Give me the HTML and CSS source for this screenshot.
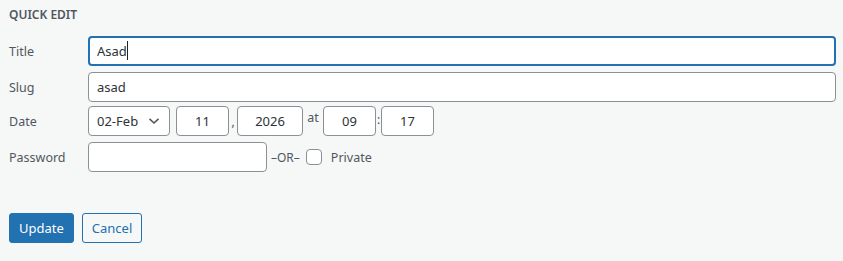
FILE: index.html
```html
<!DOCTYPE html>
<html lang="en">
<head>
    <meta charset="UTF-8">
    <title>Quick Edit</title>
    <link rel="stylesheet" href="styles.css">
</head>
<body>

<div class="quick-edit">
    <h2 class="qe-title">Quick Edit</h2>

    <div class="qe-row qe-row-title">
        <span class="qe-label">Title</span>
        <input class="qe-input qe-focus" type="text" value="Asad">
        <span class="caret"></span>
    </div>

    <div class="qe-row qe-row-slug">
        <span class="qe-label">Slug</span>
        <input class="qe-input" type="text" value="asad">
    </div>

    <div class="qe-row qe-row-date">
        <span class="qe-label">Date</span>
        <div class="qe-select">
            <span>02-Feb</span>
            <svg width="12" height="8" viewBox="0 0 12 8"><path d="M1.5 1.8 L6 6 L10.5 1.8" fill="none" stroke="#50575e" stroke-width="1.6"/></svg>
        </div>
        <input class="qe-input qe-num day" type="text" value="11">
        <span class="sep">,</span>
        <input class="qe-input qe-num year" type="text" value="2026">
        <span class="sep at">at</span>
        <input class="qe-input qe-num hour" type="text" value="09">
        <span class="sep colon">:</span>
        <input class="qe-input qe-num min" type="text" value="17">
    </div>

    <div class="qe-row qe-row-pass">
        <span class="qe-label">Password</span>
        <input class="qe-input pass" type="text" value="">
        <span class="or">&ndash;OR&ndash;</span>
        <span class="checkbox"></span>
        <span class="private">Private</span>
    </div>

    <div class="qe-actions">
        <button class="btn btn-primary">Update</button>
        <button class="btn btn-secondary">Cancel</button>
    </div>
</div>

</body>
</html>
```

FILE: styles.css
```css
body {
    margin: 0;
    background-color: #f6f7f7;
    font-family: "Noto Sans", "Open Sans", sans-serif;
    font-size: 13px;
    color: #3c434a;
}

.quick-edit {
    padding: 6px 7px 0 9px;
}

.qe-title {
    margin: 0 0 12px 0;
    font-size: 12px;
    font-weight: 600;
    text-transform: uppercase;
    color: #50575e;
    line-height: 18px;
}

.qe-row {
    display: flex;
    align-items: center;
    position: relative;
}

.qe-row-title { margin-bottom: 6px; }
.qe-row-slug { margin-bottom: 4px; }
.qe-row-date { margin-bottom: 6px; }

.qe-label {
    width: 79px;
    flex: none;
    color: #50575e;
    font-size: 12.5px;
}

.qe-input {
    box-sizing: border-box;
    height: 30px;
    flex: 1;
    border: 1px solid #8c8f94;
    border-radius: 4px;
    background: #fff;
    padding: 0 8px;
    font-family: inherit;
    font-size: 13px;
    color: #2c3338;
    outline: none;
    min-width: 0;
}

.qe-focus {
    border: 2px solid #2271b1;
    padding-left: 7px;
}

.caret {
    position: absolute;
    left: 118px;
    top: 5px;
    width: 1px;
    height: 19px;
    background: #1d2327;
}

.qe-select {
    box-sizing: border-box;
    width: 82px;
    height: 30px;
    flex: none;
    border: 1px solid #8c8f94;
    border-radius: 4px;
    background: #fff;
    display: flex;
    align-items: center;
    justify-content: space-between;
    padding: 0 9px 0 8px;
    color: #2c3338;
}

.qe-num {
    flex: none;
    text-align: center;
    padding: 0 4px;
}

.day { width: 53px; margin-left: 6px; }
.year { width: 66px; }
.hour { width: 53px; }
.min { width: 53px; }

.sep {
    width: 8px;
    flex: none;
    text-align: center;
    align-self: flex-end;
    padding-bottom: 6px;
    color: #50575e;
    font-size: 12px;
}

.sep.colon {
    width: 5px;
    align-self: flex-start;
    padding: 5px 0 0 0;
}

.sep.at {
    width: 20px;
    align-self: flex-start;
    padding: 3px 0 0 0;
    font-size: 12.5px;
}

.pass {
    flex: none;
    width: 179px;
}

.or {
    margin-left: 4px;
    font-size: 12px;
    color: #50575e;
}

.checkbox {
    box-sizing: border-box;
    width: 16px;
    height: 16px;
    margin-left: 6px;
    border: 1px solid #8c8f94;
    border-radius: 4px;
    background: #fff;
}

.private {
    margin-left: 9px;
    color: #50575e;
    font-size: 12.5px;
}

.qe-actions {
    display: flex;
    gap: 8px;
    margin-top: 41px;
}

.btn {
    box-sizing: border-box;
    height: 30px;
    padding: 0 9px;
    border-radius: 3px;
    font-family: inherit;
    font-size: 13px;
    cursor: pointer;
}

.btn-primary {
    background: #2271b1;
    border: 1px solid #2271b1;
    color: #fff;
}

.btn-secondary {
    background: #f6f7f7;
    border: 1px solid #2271b1;
    color: #2271b1;
}
```
